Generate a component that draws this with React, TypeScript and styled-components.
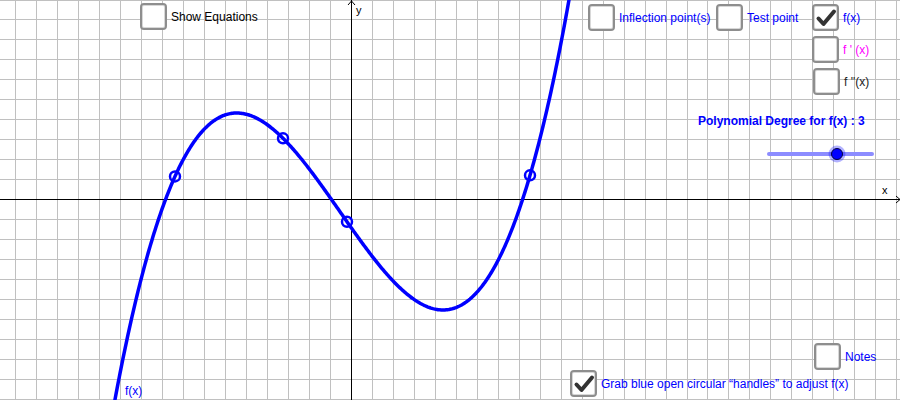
import styled, { createGlobalStyle } from "styled-components";

const GlobalStyle = createGlobalStyle`
  html, body {
    margin: 0;
    padding: 0;
    background: #ffffff;
  }
  body {
    font-family: "Liberation Sans", Arial, sans-serif;
  }
`;

const W = 900;
const H = 400;
const ORIGIN_X = 351;
const ORIGIN_Y = 199;
const STEP_X = 20.97;
const STEP_Y = 19.95;

// cubic fitted to the picture: inflection point + half distance between extrema
const XI = 339.85;
const YI = 211.5;
const A = 4.487e-5;
const D = 103.15;

const f = (px: number) => {
  const s = px - XI;
  return YI - A * (s * s * s - 3 * D * D * s);
};

const Stage = styled.div`
  position: relative;
  width: ${W}px;
  height: ${H}px;
  overflow: hidden;
  background: #ffffff;
`;

const Plot = styled.svg`
  display: block;
`;

const CheckItem = styled.label<{ $x: number; $y: number }>`
  position: absolute;
  left: ${(p) => p.$x}px;
  top: ${(p) => p.$y}px;
  display: flex;
  align-items: center;
  gap: 4px;
  cursor: pointer;
`;

const Box = styled.span`
  width: 23px;
  height: 23px;
  border: 2px solid #8e8e8e;
  border-radius: 4px;
  background: #ffffff;
  display: flex;
  align-items: center;
  justify-content: center;
  box-shadow: inset 0 0 0 1px #d8d8d8;
`;

const Caption = styled.span<{ $color: string }>`
  font-size: 12px;
  line-height: 14px;
  color: ${(p) => p.$color};
  white-space: nowrap;
`;

const SliderTitle = styled.div`
  position: absolute;
  left: 698px;
  top: 114px;
  font-size: 12px;
  line-height: 14px;
  font-weight: bold;
  color: #0000ff;
  white-space: nowrap;
`;

const CurveLabel = styled.div`
  position: absolute;
  left: 125px;
  top: 384px;
  font-size: 12px;
  line-height: 14px;
  color: #0000ff;
`;

const AxisLabel = styled.div<{ $x: number; $y: number }>`
  position: absolute;
  left: ${(p) => p.$x}px;
  top: ${(p) => p.$y}px;
  font-size: 11px;
  line-height: 12px;
  color: #000000;
`;

const Check = () => (
  <svg width="22" height="22" viewBox="0 0 22 22">
    <path
      d="M3.5 11.5 L8.5 17 L19 4.5"
      fill="none"
      stroke="#333333"
      strokeWidth="4"
      strokeLinecap="round"
      strokeLinejoin="round"
    />
  </svg>
);

interface Option {
  x: number;
  y: number;
  text: string;
  color: string;
  checked?: boolean;
}

const options: Option[] = [
  { x: 140, y: 3, text: "Show Equations", color: "#000000" },
  { x: 588, y: 4, text: "Inflection point(s)", color: "#0000ff" },
  { x: 716, y: 4, text: "Test point", color: "#0000ff" },
  { x: 812, y: 4, text: "f(x)", color: "#0000ff", checked: true },
  { x: 812, y: 36, text: "f ' (x)", color: "#ff00ff" },
  { x: 813, y: 68, text: "f ''(x)", color: "#222222" },
  { x: 814, y: 343, text: "Notes", color: "#0000ff" },
  {
    x: 570,
    y: 370,
    text: "Grab blue open circular “handles” to adjust f(x)",
    color: "#0000ff",
    checked: true,
  },
];

const Grid = () => {
  const vlines: number[] = [];
  for (let k = -20; k <= 30; k++) {
    const x = Math.round(ORIGIN_X + STEP_X * k);
    if (x >= 0 && x <= W && k !== 0) vlines.push(x);
  }
  const hlines: number[] = [];
  for (let k = -12; k <= 12; k++) {
    const y = Math.round(ORIGIN_Y + STEP_Y * k);
    if (y >= -1 && y <= H && k !== 0) hlines.push(y);
  }
  return (
    <g stroke="#c0c0c0" strokeWidth="1">
      {vlines.map((x) => (
        <line key={"v" + x} x1={x + 0.5} y1={0} x2={x + 0.5} y2={H} />
      ))}
      {hlines.map((y) => (
        <line key={"h" + y} x1={0} y1={y + 0.5} x2={W} y2={y + 0.5} />
      ))}
    </g>
  );
};

const Curve = () => {
  const pts: string[] = [];
  for (let px = 100; px <= 590; px += 1) {
    pts.push(`${px},${f(px).toFixed(2)}`);
  }
  const handles = [175, 283, 347, 530];
  return (
    <g>
      <polyline
        points={pts.join(" ")}
        fill="none"
        stroke="#0000ff"
        strokeWidth="3.5"
        strokeLinejoin="round"
      />
      {handles.map((hx) => (
        <circle
          key={hx}
          cx={hx}
          cy={f(hx)}
          r="5"
          fill="none"
          stroke="#0000ff"
          strokeWidth="2.5"
        />
      ))}
    </g>
  );
};

const Slider = () => (
  <g>
    <line
      x1={769}
      y1={154}
      x2={872}
      y2={154}
      stroke="#8c8cff"
      strokeWidth="4"
      strokeLinecap="round"
    />
    <circle cx={837} cy={154} r="8.5" fill="#0000ff" fillOpacity="0.3" />
    <circle cx={837} cy={154} r="5.5" fill="#0000ff" stroke="#000040" strokeWidth="1" />
  </g>
);

const App = () => {
  return (
    <Stage>
      <GlobalStyle />
      <Plot width={W} height={H} viewBox={`0 0 ${W} ${H}`}>
        <Grid />
        <g stroke="#000000" strokeWidth="1" fill="none">
          <line x1={0} y1={ORIGIN_Y + 0.5} x2={W} y2={ORIGIN_Y + 0.5} />
          <line x1={ORIGIN_X + 0.5} y1={0} x2={ORIGIN_X + 0.5} y2={H} />
          <polyline points={`${ORIGIN_X - 3},${5} ${ORIGIN_X + 0.5},${1} ${ORIGIN_X + 4},${5}`} />
          <polyline points={`${W - 4},${ORIGIN_Y - 3} ${W},${ORIGIN_Y + 0.5} ${W - 4},${ORIGIN_Y + 4}`} />
        </g>
        <Curve />
        <Slider />
      </Plot>

      <AxisLabel $x={356} $y={4}>y</AxisLabel>
      <AxisLabel $x={882} $y={184}>x</AxisLabel>
      <CurveLabel>f(x)</CurveLabel>
      <SliderTitle>Polynomial Degree for f(x) : 3</SliderTitle>

      {options.map((o) => (
        <CheckItem key={o.text} $x={o.x} $y={o.y}>
          <Box>{o.checked && <Check />}</Box>
          <Caption $color={o.color}>{o.text}</Caption>
        </CheckItem>
      ))}
    </Stage>
  );
};

export default App;
